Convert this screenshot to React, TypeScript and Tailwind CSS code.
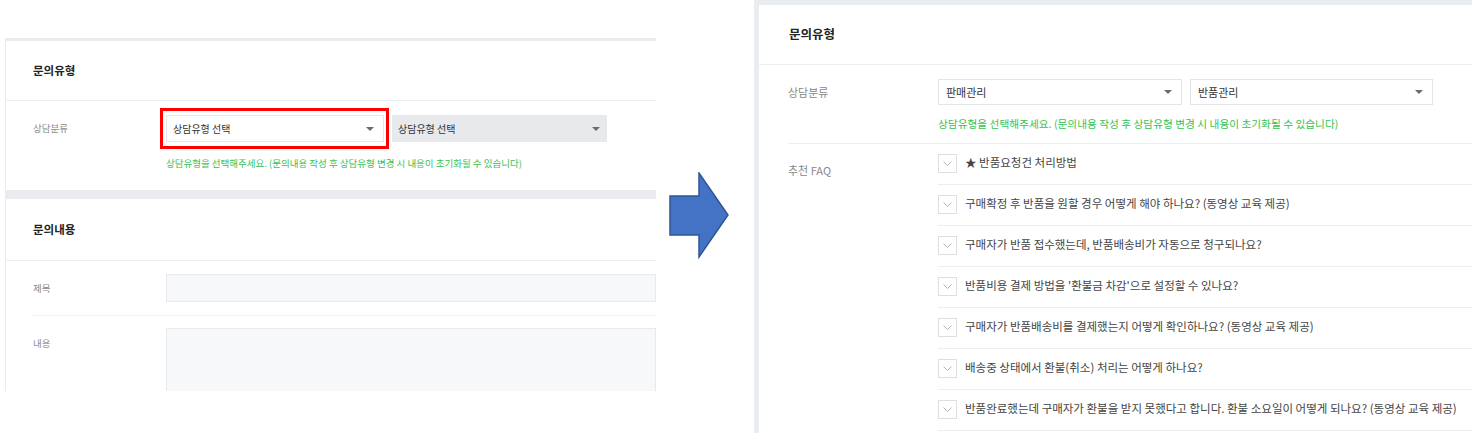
import React from "react";

const FONT = "font-['Noto_Sans_CJK_KR','Noto_Sans',sans-serif]";

function Caret() {
  return (
    <svg width="8" height="4" viewBox="0 0 8 4" className="shrink-0">
      <path d="M0 0H8L4 4Z" fill="#6b6b6b" />
    </svg>
  );
}

function Chevron() {
  return (
    <svg width="9" height="5" viewBox="0 0 9 5">
      <polyline points="0.5,0.5 4.5,4.5 8.5,0.5" fill="none" stroke="#b5b5b5" strokeWidth="1" />
    </svg>
  );
}

const faqs = [
  "★ 반품요청건 처리방법",
  "구매확정 후 반품을 원할 경우 어떻게 해야 하나요? (동영상 교육 제공)",
  "구매자가 반품 접수했는데, 반품배송비가 자동으로 청구되나요?",
  "반품비용 결제 방법을 '환불금 차감'으로 설정할 수 있나요?",
  "구매자가 반품배송비를 결제했는지 어떻게 확인하나요? (동영상 교육 제공)",
  "배송중 상태에서 환불(취소) 처리는 어떻게 하나요?",
  "반품완료했는데 구매자가 환불을 받지 못했다고 합니다. 환불 소요일이 어떻게 되나요? (동영상 교육 제공)",
];

function LeftPanel() {
  return (
    <div className="w-[656px] shrink-0 pt-[38px]">
      <div className="ml-[5px] h-[353px] overflow-hidden bg-[#e9ebef] pt-[3px] pl-px">
        {/* Card 1 */}
        <div className="bg-white">
          <div className="flex h-[60px] items-center border-b border-[#eceef1] pl-[27px] text-[11.5px] font-bold text-[#222]">
            문의유형
          </div>
          <div className="ml-[27px] h-[89px] pt-[14px]">
            <div className="flex">
              <div className="flex h-[27px] w-[133px] items-center text-[9.5px] text-[#8a8a8a]">상담분류</div>
              <div className="flex gap-[8px]">
                <div className="relative">
                  <div className="flex h-[27px] w-[218px] items-center justify-between border border-[#e6e7ea] bg-white pl-[6px] pr-[9px] text-[10px] text-[#333]">
                    <span>상담유형 선택</span>
                    <Caret />
                  </div>
                  <div className="pointer-events-none absolute -top-[7px] -right-[5px] -bottom-[7px] -left-[6px] border-[3px] border-[#ff0000]" />
                </div>
                <div className="flex h-[27px] w-[215px] items-center justify-between bg-[#e8e9ed] pl-[6px] pr-[7px] text-[10px] text-[#333]">
                  <span>상담유형 선택</span>
                  <Caret />
                </div>
              </div>
            </div>
            <div className="mt-[15px] pl-[133px] text-[9.5px] leading-[12px] text-[#35c253]">
              상담유형을 선택해주세요. (문의내용 작성 후 상담유형 변경 시 내용이 초기화될 수 있습니다)
            </div>
          </div>
        </div>
        {/* Card 2 */}
        <div className="mt-[9px] bg-white">
          <div className="flex h-[62px] items-center border-b border-[#eceef1] pl-[27px] text-[11.5px] font-bold text-[#222]">
            문의내용
          </div>
          <div className="ml-[27px] flex h-[55px] items-center border-b border-[#eef0f3]">
            <div className="w-[133px] text-[9.5px] text-[#8a8a8a]">제목</div>
            <div className="h-[28px] flex-1 border border-[#e8e9ec] bg-[#f7f8fa]" />
          </div>
          <div className="ml-[27px] flex pt-[12px]">
            <div className="mt-[9px] w-[133px] text-[9.5px] leading-[12px] text-[#8a8a8a]">내용</div>
            <div className="h-[90px] flex-1 border border-[#e8e9ec] bg-[#f7f8fa]" />
          </div>
        </div>
      </div>
    </div>
  );
}

function Arrow() {
  return (
    <div className="w-[98px] shrink-0 pl-[13px] pt-[172px]">
      <svg width="62" height="88" viewBox="0 0 62 88">
        <polygon
          points="1,24 30,24 30,1 59,43 30,85 30,63 1,63"
          fill="#4472c4"
          stroke="#2f5597"
          strokeWidth="1.5"
          strokeLinejoin="miter"
        />
      </svg>
    </div>
  );
}

function RightPanel() {
  return (
    <div className="h-[433px] flex-1 overflow-hidden bg-[#e9ecf1] pt-[5px] pl-[5px]">
      <div className="h-full bg-white">
        <div className="flex h-[60px] items-center border-b border-[#eceef1] pl-[30px] text-[12.5px] font-bold text-[#222]">
          문의유형
        </div>
        <div className="ml-[29px] h-[79px] border-b border-[#eceef1] pt-[14px]">
          <div className="flex">
            <div className="flex h-[26px] w-[150px] items-center text-[11px] text-[#888]">상담분류</div>
            <div className="flex gap-[8px]">
              <div className="flex h-[26px] w-[244px] items-center justify-between border border-[#e3e4e7] bg-white pl-[7px] pr-[9px] text-[11px] text-[#333]">
                <span>판매관리</span>
                <Caret />
              </div>
              <div className="flex h-[26px] w-[243px] items-center justify-between border border-[#e3e4e7] bg-white pl-[7px] pr-[9px] text-[11px] text-[#333]">
                <span>반품관리</span>
                <Caret />
              </div>
            </div>
          </div>
          <div className="mt-[13px] pl-[150px] text-[10.7px] leading-[12px] text-[#35c253]">
            상담유형을 선택해주세요. (문의내용 작성 후 상담유형 변경 시 내용이 초기화될 수 있습니다)
          </div>
        </div>
        <div className="ml-[29px] flex">
          <div className="w-[150px] pt-[20px] text-[11px] leading-[12px] text-[#888]">추천 FAQ</div>
          <div className="flex-1">
            {faqs.map((q) => (
              <div key={q} className="flex h-[41px] items-center gap-[8px] border-b border-[#eceef1] pb-[2px]">
                <div className="flex h-[19px] w-[19px] shrink-0 items-center justify-center border border-[#dedede] bg-white">
                  <Chevron />
                </div>
                <span className="whitespace-nowrap text-[11.5px] text-[#444]">{q}</span>
              </div>
            ))}
          </div>
        </div>
      </div>
    </div>
  );
}

export default function App() {
  return (
    <div className={`flex h-[440px] w-[1472px] overflow-hidden bg-white ${FONT}`}>
      <LeftPanel />
      <Arrow />
      <RightPanel />
    </div>
  );
}
